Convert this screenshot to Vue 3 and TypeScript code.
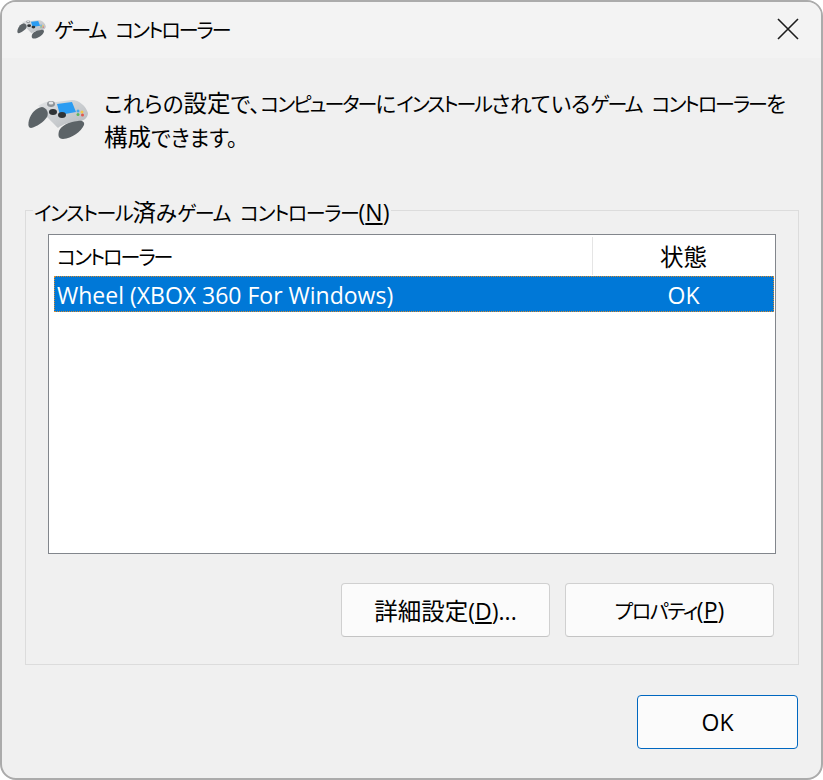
<script setup lang="ts">
import { h } from 'vue'

interface Row {
  name: string
  status: string
}

const rows: Row[] = [{ name: 'Wheel (XBOX 360 For Windows)', status: 'OK' }]

// Kana in the reference font are narrower than kanji, so each script gets its own size
const kindOf = (run: string) => {
  if (/[\u4e00-\u9fff]/.test(run)) return 'run-kanji'
  if (/[\u3040-\u309f、。]/.test(run)) return 'run-hira'
  if (/[\u30a0-\u30ff]/.test(run)) return 'run-kata'
  return 'run-latin'
}

const Jp = (props: { text: string }) =>
  (props.text.match(/[\u4e00-\u9fff]+|[\u3040-\u309f、。]+|[\u30a0-\u30ff]+|[^\u3040-\u30ff\u4e00-\u9fff、。]+/g) ?? []).map((run) =>
    h('span', { class: kindOf(run) }, run)
  )
Jp.props = ['text']
</script>

<template>
  <div class="window">
    <header class="titlebar">
      <svg class="pad pad-small" viewBox="0 0 60 44">
        <use href="#gamepad" />
      </svg>
      <span class="title"><Jp text="ゲーム コントローラー" /></span>
      <svg class="close" viewBox="0 0 22 22">
        <path d="M1 1 21 21M21 1 1 21" fill="none" stroke="#1c1c1c" stroke-width="1.6" />
      </svg>
    </header>

    <main class="body">
      <section class="intro">
        <svg class="pad pad-large" viewBox="0 0 60 44">
          <defs>
            <linearGradient id="shell" x1="0" y1="0" x2="1" y2="1">
              <stop offset="0" stop-color="#e2e4e6" />
              <stop offset="1" stop-color="#b4b8bc" />
            </linearGradient>
            <g id="gamepad">
              <path d="M10 8C16 4 22 2 28 4L44 2C51 2 58 8 60 15C60 21 54 23 50 24C42 24 35 26 30 30C25 25 20 20 18 18C17 13 15 10 10 8Z" fill="url(#shell)" />
              <path d="M14 9C19 10 21 15 19 19C16 24 8 29 3 30C0 30 0 26 1 22C3 15 8 10 14 9Z" fill="#5c6367" />
              <path d="M50 23C54 22 57 24 56 27C53 34 44 40 35 41C30 41 30 37 31 33C33 28 40 24 50 23Z" fill="#5c6367" />
              <path d="M29 6 44 4 48 14 32 17Z" fill="#2b9cf2" />
              <ellipse cx="23" cy="6" rx="4" ry="3" fill="#8d9297" />
              <ellipse cx="23" cy="5" rx="2.400" ry="1.600" fill="#e4e6e8" />
              <ellipse cx="25" cy="14" rx="4" ry="3" fill="#2f3336" />
              <ellipse cx="34" cy="17" rx="4" ry="3" fill="#2f3336" />
              <circle cx="50" cy="13" r="1.500" fill="#4aa6e8" />
              <circle cx="54" cy="14" r="1.500" fill="#f2c94c" />
              <circle cx="50" cy="16.500" r="1.500" fill="#5cb85c" />
              <circle cx="54.500" cy="17" r="1.500" fill="#e0584f" />
            </g>
          </defs>
          <use href="#gamepad" />
        </svg>
        <p class="intro-text">
          <Jp text="これらの設定で、コンピューターにインストールされているゲーム コントローラーを" /><br />
          <Jp text="構成できます。" />
        </p>
      </section>

      <fieldset class="group">
        <legend class="legend"><Jp text="インストール済みゲーム コントローラー(" /><u class="run-latin">N</u><span class="run-latin">)</span></legend>
        <div class="list">
          <div class="list-head">
            <span class="col-name"><Jp text="コントローラー" /></span>
            <span class="col-status"><Jp text="状態" /></span>
          </div>
          <div v-for="row in rows" :key="row.name" class="list-row">
            <span class="col-name">{{ row.name }}</span>
            <span class="col-status">{{ row.status }}</span>
          </div>
        </div>
        <div class="group-actions">
          <button class="btn" type="button"><Jp text="詳細設定(" /><u class="run-latin">D</u><span class="run-latin">)...</span></button>
          <button class="btn" type="button"><Jp text="プロパティ(" /><u class="run-latin">P</u><span class="run-latin">)</span></button>
        </div>
      </fieldset>

      <footer class="footer">
        <button class="btn btn-default" type="button">OK</button>
      </footer>
    </main>
  </div>
</template>

<style>
html,
body {
  margin: 0;
  background: #fff;
}

.run-kanji {
  font-size: 23.5px;
}

.run-hira {
  font-size: 21.5px;
  font-feature-settings: "palt";
}

.run-kata {
  font-size: 20px;
  letter-spacing: -2px;
  font-feature-settings: "palt";
}

.legend .run-kata,
.btn .run-kata {
  letter-spacing: -1.4px;
}

.run-latin {
  font-size: 23px;
}
</style>

<style scoped>
.window {
  width: 823px;
  height: 780px;
  box-sizing: border-box;
  border: 2px solid #ababab;
  border-radius: 16px;
  background: #f0f0f0;
  overflow: hidden;
  display: flex;
  flex-direction: column;
  font-family: "Open Sans", "Noto Sans CJK JP", sans-serif;
  font-size: 23px;
  word-spacing: 4px;
  color: #000;
}

.titlebar {
  height: 56px;
  flex: none;
  box-sizing: border-box;
  background: #f3f3f3;
  display: flex;
  align-items: center;
  padding: 0 22px 2px 15px;
}

.pad {
  display: block;
  flex: none;
}

.pad-small {
  width: 29px;
  height: 21px;
}

.pad-large {
  width: 60px;
  height: 44px;
}

.title {
  margin-left: 8px;
  flex: 1;
  white-space: nowrap;
}

.close {
  width: 22px;
  height: 22px;
}

.body {
  flex: 1;
  display: flex;
  flex-direction: column;
}

.intro {
  display: flex;
  align-items: flex-start;
  padding: 40px 0 0 26px;
  height: 120px;
  box-sizing: border-box;
}

.intro-text {
  margin: -11px 0 0 16px;
  line-height: 32px;
  white-space: nowrap;
}

.group {
  margin: 32px 22px 0 23px;
  padding: 0 22px;
  height: 455px;
  box-sizing: border-box;
  border: 1px solid #dcdcdc;
  min-width: 0;
  position: relative;
}

.legend {
  position: absolute;
  top: -14px;
  left: 7px;
  padding: 0 2px 0 1px;
  background: #f0f0f0;
  line-height: 30px;
  white-space: nowrap;
}

.list {
  margin-top: 23px;
  height: 320px;
  box-sizing: border-box;
  border: 1px solid #82868c;
  background: #fff;
  padding: 0 1px 0 5px;
}

.list-head,
.list-row {
  display: flex;
  align-items: center;
}

.list-head {
  height: 41px;
}

.list-head .col-status {
  border-left: 1px solid #e5e5e5;
  height: 38px;
  line-height: 40px;
}

.list-row {
  height: 36px;
  box-sizing: border-box;
  padding-top: 2px;
  background: #0078d7;
  outline: 1px dotted #d98a2b;
  outline-offset: -1px;
  color: #fff;
  word-spacing: 0;
}

.col-name {
  flex: 1;
  padding-left: 3px;
  white-space: nowrap;
}

.col-status {
  width: 181px;
  flex: none;
  text-align: center;
}

.group-actions {
  display: flex;
  justify-content: flex-end;
  gap: 15px;
  margin-top: 29px;
  padding-right: 2px;
}

.btn {
  width: 209px;
  height: 54px;
  box-sizing: border-box;
  border: 1px solid #d0d0d0;
  border-bottom-color: #c4c4c4;
  border-radius: 4px;
  background: #fbfbfb;
  font: inherit;
  color: #000;
  padding: 0;
}

.footer {
  display: flex;
  justify-content: flex-end;
  padding: 30px 23px 0 0;
}

.btn-default {
  width: 161px;
  border-color: #0067c0;
}
</style>
